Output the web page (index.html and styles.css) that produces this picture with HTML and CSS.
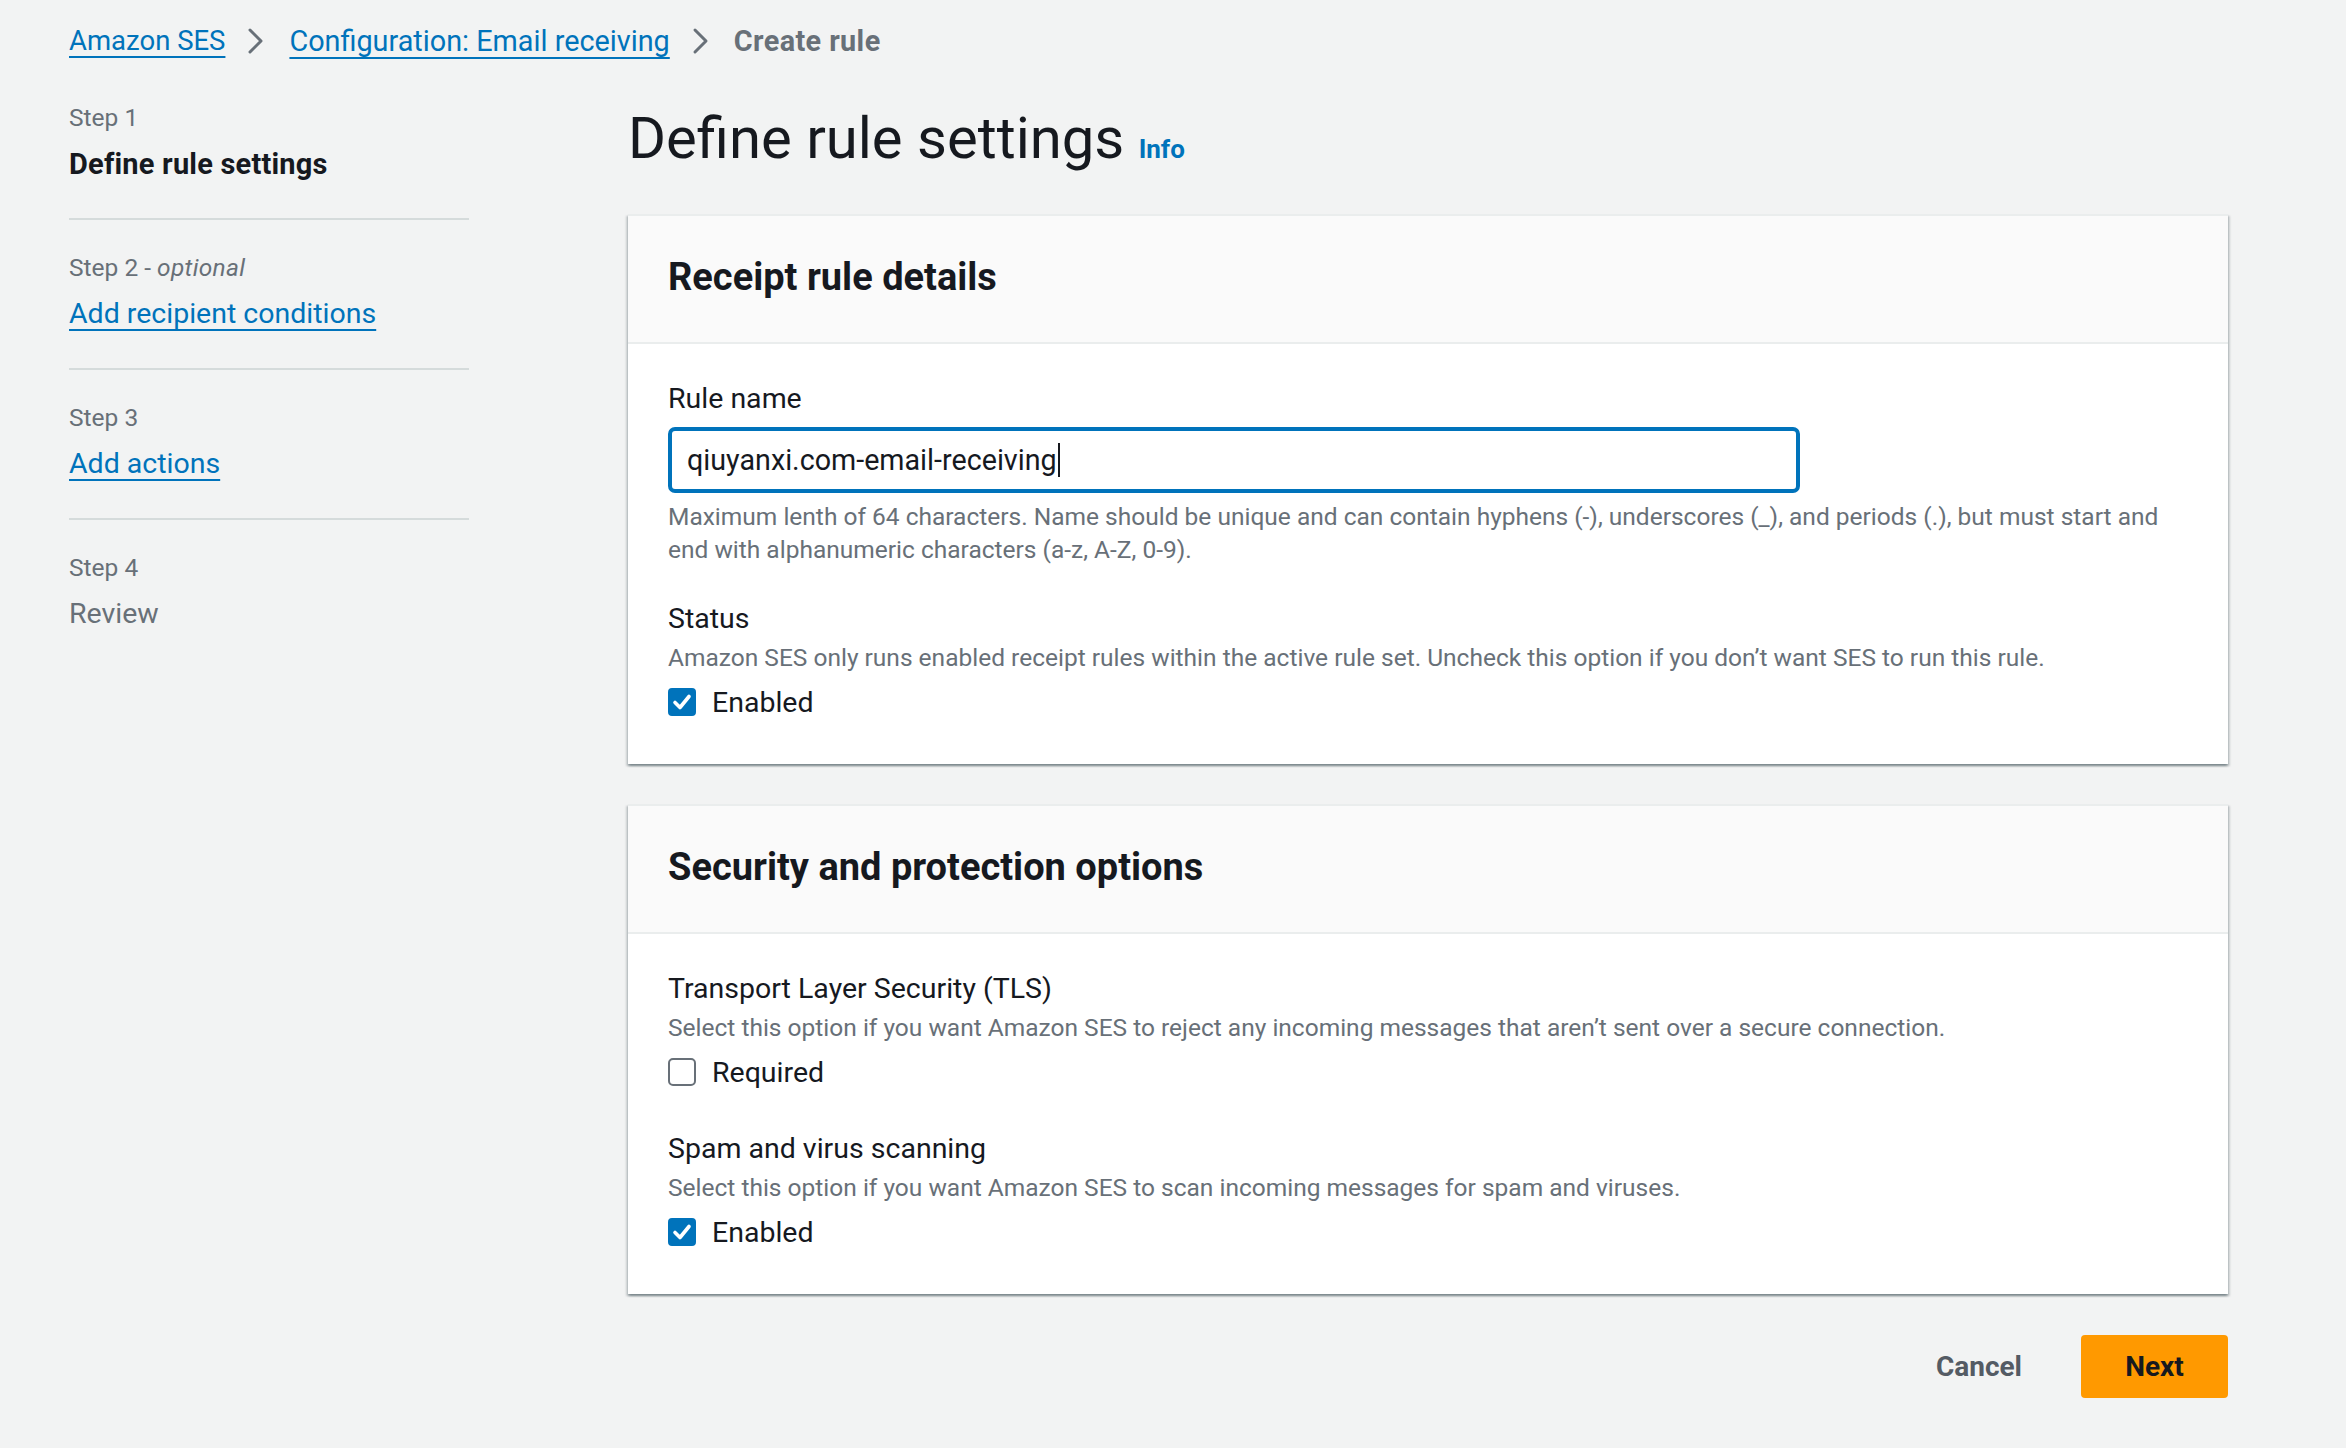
FILE: index.html
```html
<!DOCTYPE html>
<html lang="en">
<head>
<meta charset="utf-8">
<title>Create rule</title>
<link rel="stylesheet" href="styles.css">
</head>
<body>
<div class="page">
  <nav class="breadcrumbs">
    <a class="crumb-link first" href="#">Amazon SES</a>
    <svg class="chev" viewBox="0 0 18 28" aria-hidden="true"><path d="M3 3 L14 14 L3 25" fill="none" stroke="#687078" stroke-width="3" stroke-linecap="round" stroke-linejoin="round"/></svg>
    <a class="crumb-link" href="#">Configuration: Email receiving</a>
    <svg class="chev" viewBox="0 0 18 28" aria-hidden="true"><path d="M3 3 L14 14 L3 25" fill="none" stroke="#687078" stroke-width="3" stroke-linecap="round" stroke-linejoin="round"/></svg>
    <span class="crumb-current">Create rule</span>
  </nav>

  <div class="layout">
    <ul class="steps">
      <li class="step">
        <div class="step-label">Step 1</div>
        <div class="step-title active">Define rule settings</div>
      </li>
      <li class="step">
        <div class="step-label">Step 2 - <em>optional</em></div>
        <a class="step-title link" href="#">Add recipient conditions</a>
      </li>
      <li class="step">
        <div class="step-label">Step 3</div>
        <a class="step-title link" href="#">Add actions</a>
      </li>
      <li class="step">
        <div class="step-label">Step 4</div>
        <div class="step-title disabled">Review</div>
      </li>
    </ul>

    <main class="main">
      <h1 class="page-title">Define rule settings <a class="info" href="#">Info</a></h1>

      <section class="container">
        <div class="container-header"><h2>Receipt rule details</h2></div>
        <div class="container-body">
          <div class="field">
            <div class="label">Rule name</div>
            <div class="input"><span>qiuyanxi.com-email-receiving</span><span class="caret"></span></div>
            <div class="desc">Maximum lenth of 64 characters. Name should be unique and can contain hyphens (-), underscores (_), and periods (.), but must start and end with alphanumeric characters (a-z, A-Z, 0-9).</div>
          </div>
          <div class="field">
            <div class="label">Status</div>
            <div class="desc tight">Amazon SES only runs enabled receipt rules within the active rule set. Uncheck this option if you don’t want SES to run this rule.</div>
            <label class="check-row">
              <span class="box checked"><svg viewBox="0 0 28 28"><path d="M7 14.5 L12 19.5 L21 8.5" fill="none" stroke="#fff" stroke-width="3.6" stroke-linecap="round" stroke-linejoin="round"/></svg></span>
              <span>Enabled</span>
            </label>
          </div>
        </div>
      </section>

      <section class="container">
        <div class="container-header"><h2>Security and protection options</h2></div>
        <div class="container-body">
          <div class="field">
            <div class="label">Transport Layer Security (TLS)</div>
            <div class="desc tight">Select this option if you want Amazon SES to reject any incoming messages that aren’t sent over a secure connection.</div>
            <label class="check-row">
              <span class="box"></span>
              <span>Required</span>
            </label>
          </div>
          <div class="field spaced">
            <div class="label">Spam and virus scanning</div>
            <div class="desc tight">Select this option if you want Amazon SES to scan incoming messages for spam and viruses.</div>
            <label class="check-row">
              <span class="box checked"><svg viewBox="0 0 28 28"><path d="M7 14.5 L12 19.5 L21 8.5" fill="none" stroke="#fff" stroke-width="3.6" stroke-linecap="round" stroke-linejoin="round"/></svg></span>
              <span>Enabled</span>
            </label>
          </div>
        </div>
      </section>

      <div class="actions">
        <button class="btn-link" type="button">Cancel</button>
        <button class="btn-primary" type="button">Next</button>
      </div>
    </main>
  </div>
</div>
</body>
</html>
```

FILE: styles.css
```css
* { box-sizing: border-box; }

html, body {
  margin: 0;
  padding: 0;
  background: #f2f3f3;
}

body {
  font-family: Roboto, "Liberation Sans", Arial, sans-serif;
  color: #16191f;
  width: 2346px;
  min-height: 1448px;
}

.page {
  padding: 21px 0 40px 69px;
}

/* Breadcrumbs */
.breadcrumbs {
  display: flex;
  align-items: center;
  height: 40px;
  font-size: 28.8px;
  line-height: 40px;
}

.crumb-link {
  color: #0073bb;
  text-decoration: underline;
  text-decoration-thickness: 2px;
  text-underline-offset: 6px;
}

.crumb-link.first { font-size: 27.5px; }

.chev {
  width: 18px;
  height: 28px;
  margin: 0 24px 0 22px;
}

.crumb-current {
  color: #687078;
  font-weight: 700;
  letter-spacing: 0.4px;
}

/* Layout */
.layout {
  display: grid;
  grid-template-columns: 400px 1600px;
  column-gap: 159px;
  margin-top: 41px;
}

/* Steps nav */
.steps {
  list-style: none;
  margin: 0;
  padding: 0;
}

.step {
  padding: 32px 0 34px;
  border-bottom: 2px solid #d5dbdb;
}

.step:first-child { padding-top: 0; }
.step:last-child { border-bottom: none; }

.step-label {
  font-size: 24.5px;
  line-height: 32px;
  color: #687078;
}

.step-label em { font-style: italic; letter-spacing: 0.3px; }

.step-title {
  display: inline-block;
  margin-top: 10px;
  font-size: 28.5px;
  line-height: 40px;
}

.step-title.active { font-weight: 700; color: #16191f; font-size: 29px; letter-spacing: 0.2px; }
.step-title.link {
  color: #0073bb;
  text-decoration: underline;
  text-decoration-thickness: 2px;
  text-underline-offset: 6px;
}
.step-title.disabled { color: #687078; }

/* Main */
.main { min-width: 0; }

.page-title {
  margin: 0;
  font-size: 58px;
  line-height: 72px;
  font-weight: 400;
  color: #16191f;
}

.info {
  font-size: 26px;
  line-height: 26px;
  font-weight: 700;
  color: #0073bb;
  text-decoration: none;
  vertical-align: baseline;
}

.container {
  margin-top: 40px;
  background: #fff;
  border-top: 2px solid #eaeded;
  box-shadow: 0 2px 2px 0 rgba(0, 28, 36, 0.3), 2px 2px 2px 0 rgba(0, 28, 36, 0.15), -2px 2px 2px 0 rgba(0, 28, 36, 0.15);
}

.container + .container { margin-top: 40px; }

.container-header {
  background: #fafafa;
  border-bottom: 2px solid #eaeded;
  padding: 39px 40px 43px;
}

.container-header h2 {
  margin: 0;
  font-size: 38px;
  line-height: 44px;
  font-weight: 700;
  color: #16191f;
}

.container-body {
  padding: 35px 40px 42px;
}

.field + .field { margin-top: 33px; }
.field + .field.spaced { margin-top: 37px; }

.label {
  font-size: 28.5px;
  line-height: 40px;
  color: #16191f;
}

.input {
  margin-top: 8px;
  width: 1132px;
  height: 66px;
  border: 4px solid #0073bb;
  border-radius: 7px;
  padding: 0 15px;
  display: flex;
  align-items: center;
  font-size: 28.7px;
  color: #16191f;
}

.caret {
  display: inline-block;
  width: 2px;
  height: 34px;
  background: #16191f;
  margin-left: 1px;
}

.desc {
  margin-top: 7px;
  font-size: 24.5px;
  line-height: 33px;
  color: #687078;
}

.desc.tight { margin-top: 2px; }

.check-row {
  margin-top: 8px;
  display: flex;
  align-items: center;
  gap: 16px;
  height: 40px;
  font-size: 28.5px;
  color: #16191f;
}

.box {
  width: 28px;
  height: 28px;
  border: 2px solid #687078;
  border-radius: 5px;
  background: #fff;
  display: inline-flex;
  flex: none;
}

.box.checked {
  background: #0073bb;
  border-color: #0073bb;
  border-radius: 4px;
}

.box svg { width: 100%; height: 100%; }
.box.checked svg { margin: -2px; width: 28px; height: 28px; }

/* Actions */
.actions {
  margin-top: 41px;
  display: flex;
  justify-content: flex-end;
  align-items: center;
}

.btn-link, .btn-primary {
  font-family: inherit;
  font-size: 28px;
  font-weight: 700;
  border: none;
  cursor: pointer;
}

.btn-link {
  background: transparent;
  color: #545b64;
  height: 63px;
  padding: 0 40px;
  margin-right: 19px;
}

.btn-primary {
  background: #ff9900;
  color: #16191f;
  height: 63px;
  width: 147px;
  border-radius: 4px;
}
```
